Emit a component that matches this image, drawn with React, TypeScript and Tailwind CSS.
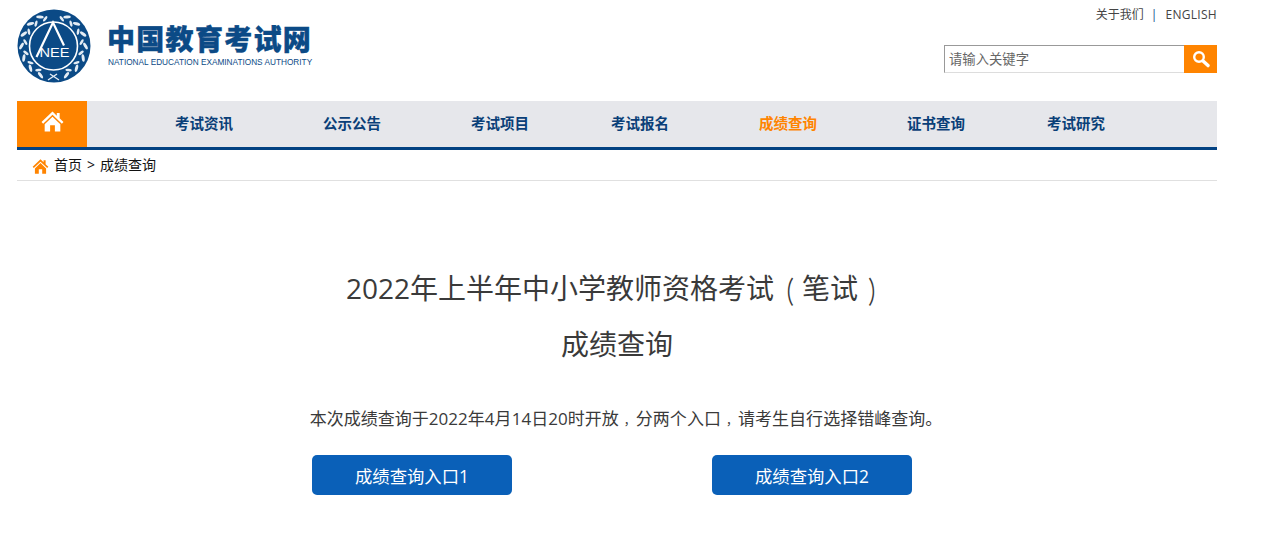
const font = "font-['Open_Sans','Noto_Sans_CJK_SC',sans-serif]";

function Branch() {
  const thetas = [114, 136, 158, 180, 202, 224, 245];
  return (
    <g>
      {thetas.map((t) => {
        const rad = (t * Math.PI) / 180;
        const ox = 36.5 + 32 * Math.cos(rad);
        const oy = 37 + 32 * Math.sin(rad);
        const ix = 36.5 + 28.4 * Math.cos(rad + 0.14);
        const iy = 37 + 28.4 * Math.sin(rad + 0.14);
        return (
          <g key={t}>
            <ellipse cx={ox} cy={oy} rx="1.5" ry="3.8" fill="#e4ecf4" transform={`rotate(${t + 30} ${ox} ${oy})`} />
            <ellipse cx={ix} cy={iy} rx="1.3" ry="3.2" fill="#e4ecf4" transform={`rotate(${t - 30} ${ix} ${iy})`} />
          </g>
        );
      })}
    </g>
  );
}

function Logo() {
  return (
    <svg width="74" height="74" viewBox="0 0 74 74" className="block">
      <circle cx="37" cy="37" r="36.5" fill="#0b4a86" />
      <Branch />
      <g transform="translate(73 0) scale(-1 1)">
        <Branch />
      </g>
      <path d="M31 71 L40 65 M42 71 L33 65" stroke="#e4ecf4" strokeWidth="1.4" />
      <circle cx="36.5" cy="37" r="24" fill="#0b4a86" stroke="#fff" strokeWidth="1.6" />
      <path d="M19.5 48 L36 13.5 L47 36.5" fill="none" stroke="#fff" strokeWidth="2.2" />
      <text x="22.5" y="48" fill="#fff" fontSize="12" fontFamily="Liberation Sans" textLength="30" lengthAdjust="spacingAndGlyphs">NEE</text>
    </svg>
  );
}

function HomeIcon({ className, color }: { className: string; color: string }) {
  return (
    <svg viewBox="0 0 24 22" className={className} fill={color}>
      <path d="M12 0.5 L0.5 11.5 L2.2 13.3 L12 4 L21.8 13.3 L23.5 11.5 L19.5 7.7 V2 H16.5 V4.9 Z" />
      <path d="M12 6 L3.8 13.8 V21.5 H9.5 V15 H14.5 V21.5 H20.2 V13.8 Z" />
    </svg>
  );
}

const nav = [
  { t: "考试资讯", w: "w-[148px]" },
  { t: "公示公告", w: "w-[148px]" },
  { t: "考试项目", w: "w-[140px]" },
  { t: "考试报名", w: "w-[148px]" },
  { t: "成绩查询", w: "w-[148px]", active: true },
  { t: "证书查询", w: "w-[140px]" },
  { t: "考试研究", w: "w-[140px]" },
];

function Comma() {
  return <span className="ml-[5px] text-[12px]">，</span>;
}

export default function App() {
  return (
    <div className={`${font} bg-white w-[1271px] h-[550px] overflow-hidden text-[#333]`}>
      <div className="w-[1200px] ml-[17px]">
        <header className="h-[101px] flex justify-between">
          <div className="flex items-start pt-[9px]">
            <Logo />
            <div className="ml-[16px] pt-[15px]">
              <div className="text-[28px] leading-[31px] font-black text-[#0b4a86] tracking-[1.3px] whitespace-nowrap [-webkit-text-stroke:0.4px_#0b4a86]">中国教育考试网</div>
              <div className="text-[8.25px] leading-[12px] mt-[2px] ml-[1px] text-[#0b4a86] font-['Liberation_Sans',sans-serif] whitespace-nowrap">NATIONAL EDUCATION EXAMINATIONS AUTHORITY</div>
            </div>
          </div>
          <div className="flex flex-col items-end">
            <div className="text-[12px] leading-[16px] mt-[7px] text-[#444] whitespace-nowrap">
              关于我们<span className="ml-[7px] mr-[8px] text-[#0b4a86]">|</span><span className="tracking-[0.3px]">ENGLISH</span>
            </div>
            <div className="flex mt-[22px] h-[28px] w-[273px]">
              <div className="flex-1 border-t border-l border-t-[#999] border-l-[#999] border-b border-b-[#ddd] pl-[4px] text-[13.33px] leading-[26px] text-[#666]">请输入关键字</div>
              <div className="w-[33px] bg-[#ff8400] flex items-center justify-center">
                <svg width="18" height="18" viewBox="0 0 18 18" fill="none" stroke="#fff">
                  <circle cx="7" cy="7" r="4.8" strokeWidth="2.4" />
                  <path d="M10.8 10.8 L16 15.6" strokeWidth="3.4" strokeLinecap="round" />
                </svg>
              </div>
            </div>
          </div>
        </header>

        <nav className="h-[49px] bg-[#e6e7eb] border-b-[3px] border-[#034282] flex">
          <div className="w-[70px] bg-[#ff8400] flex justify-center pt-[10px]">
            <HomeIcon className="w-[23px] h-[21px]" color="#fff" />
          </div>
          <div className="flex pl-[88px] text-[14.5px] leading-[46px] font-bold">
            {nav.map((n) => (
              <div key={n.t} className={`${n.w} ${n.active ? "text-[#ff8400]" : "text-[#0a3f78]"} whitespace-nowrap`}>{n.t}</div>
            ))}
          </div>
        </nav>

        <div className="h-[31px] border-b border-[#e0e0e0] flex items-center pl-[15px] pb-[2px] text-[14px] text-[#111]">
          <HomeIcon className="w-[17px] h-[15px] mt-[4px]" color="#ff8400" />
          <span className="ml-[5px]">首页</span>
          <span className="mx-[5px]">&gt;</span>
          <span>成绩查询</span>
        </div>

        <main className="pt-[79px] flex flex-col items-center">
          <h1 className="h-[56px] text-[28px] leading-[56px] font-normal text-[#3a3a3a] whitespace-nowrap">
            2022年上半年中小学教师资格考试<span className="inline-block text-[20px] scale-y-[1.5] mr-[8px]">（</span>笔试<span className="inline-block text-[20px] scale-y-[1.5] ml-[10px]">）</span>
          </h1>
          <h2 className="text-[28px] leading-[56px] font-normal text-[#3a3a3a]">成绩查询</h2>
          <p className="h-[30px] mt-[32px] ml-[18px] text-[17px] leading-[30px] tracking-[0.03px] text-[#3a3a3a] whitespace-nowrap">
            本次成绩查询于2022年4月14日20时开放<Comma />分两个入口<Comma />请考生自行选择错峰查询。
          </p>
          <div className="mt-[21px] mr-[10px] flex gap-[200px]">
            <a className="w-[200px] h-[40px] rounded-[5px] bg-[#0a60b8] text-white text-[17.33px] leading-[42px] text-center">成绩查询入口1</a>
            <a className="w-[200px] h-[40px] rounded-[5px] bg-[#0a60b8] text-white text-[17.33px] leading-[42px] text-center">成绩查询入口2</a>
          </div>
        </main>
      </div>
    </div>
  );
}
